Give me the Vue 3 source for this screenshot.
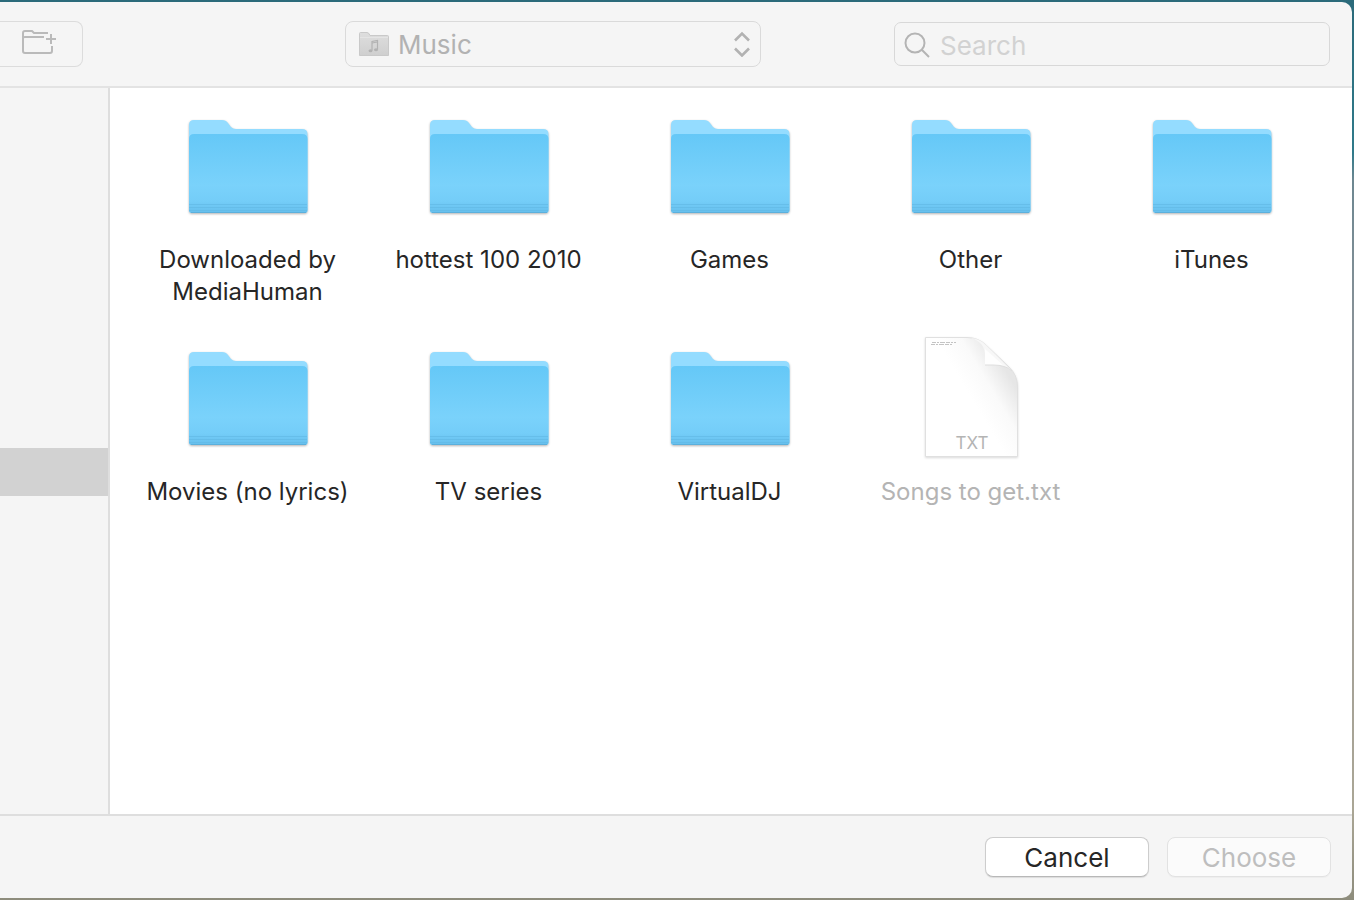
<template>
  <div class="desktop">
    <!-- gradients shared by all the file icons -->
    <svg class="gradients" width="0" height="0" aria-hidden="true">
      <defs>
        <linearGradient id="front" x1="0" y1="0" x2="0" y2="1">
          <stop offset="0" stop-color="#65c8f7" />
          <stop offset="0.65" stop-color="#7ad2fb" />
          <stop offset="0.85" stop-color="#74cdf8" />
          <stop offset="1" stop-color="#66bfed" />
        </linearGradient>
        <linearGradient id="paper" x1="0.45" y1="0.45" x2="0.8" y2="0.18">
          <stop offset="0" stop-color="#ffffff" />
          <stop offset="0.5" stop-color="#fafafa" />
          <stop offset="1" stop-color="#e6e6e6" />
        </linearGradient>
        <linearGradient id="curl" x1="0" y1="1" x2="1" y2="0">
          <stop offset="0" stop-color="#ffffff" />
          <stop offset="1" stop-color="#f0f0f0" />
        </linearGradient>
        <linearGradient id="gray" x1="0" y1="0" x2="0" y2="1">
          <stop offset="0" stop-color="#dedede" />
          <stop offset="1" stop-color="#cfcfcf" />
        </linearGradient>
      </defs>
    </svg>

    <main class="dialog">
      <header class="toolbar">
        <button class="new-folder" type="button" aria-label="New Folder" disabled>
          <svg width="36" height="26" viewBox="0 0 36 26" fill="none" stroke="#bababa" stroke-width="2">
            <path d="M26 4H12L10 2H3Q1 2 1 4V22Q1 24 3 24H28Q30 24 30 22V17" />
            <path d="M1 9Q1 8 3 8H22M29 5V15M24 10H34" />
          </svg>
        </button>

        <div class="location">
          <svg class="location-icon" width="32" height="28" viewBox="0 0 32 28">
            <path d="M1.5 25.5V3.500Q1.500 2.500 2.500 2.500H9Q11 2.500 12 5.500H29.500Q30.500 5.500 30.500 6.500V25.500Z" fill="url(#gray)" stroke="#c9c9c9" />
            <path d="M2 7.500H30" stroke="#e4e4e4" />
            <path d="M14 20.500V11.500L19.500 10.500V19.500" fill="none" stroke="#b2b2b2" stroke-width="1.2" />
            <path d="M14 13L19.500 12" stroke="#b2b2b2" />
            <ellipse cx="12.500" cy="20.700" rx="2" ry="1.500" fill="#b2b2b2" />
            <ellipse cx="18" cy="19.700" rx="2" ry="1.500" fill="#b2b2b2" />
          </svg>
          <select v-model="location" aria-label="Location" disabled>
            <option>Music</option>
          </select>
          <svg class="chevrons" width="18" height="26" viewBox="0 0 18 26" fill="none" stroke="#b2b2b2" stroke-width="2.6">
            <path d="M2 9.500L9 2.500L16 9.500M2 17.500L9 24.500L16 17.500" />
          </svg>
        </div>

        <label class="search">
          <svg width="26" height="26" viewBox="0 0 26 26" fill="none" stroke="#b4b4b4" stroke-width="2">
            <circle cx="11" cy="11" r="9.5" />
            <path d="M17.8 17.8L25 25" />
          </svg>
          <input v-model="query" type="text" placeholder="Search" aria-label="Search" />
        </label>
      </header>

      <div class="body">
        <aside class="sidebar">
          <div class="selected"></div>
        </aside>
        <ul class="files">
          <li v-for="item in items" :key="item.name" :class="{ dimmed: item.type === 'txt' }">
            <svg v-if="item.type === 'folder'" class="icon" viewBox="0 0 128 128">
              <path class="shadow" d="M5 23Q5 18 10 18H38Q42 18 44 21L47 25Q49 27 52 27H118Q123.500 27 123.500 32V108Q123.500 111 120.500 111H8Q5 111 5 108Z" fill="#94dcff" />
              <path d="M5 37Q5 32 10 32H118Q123.500 32 123.500 37V108Q123.500 111 120.500 111H8Q5 111 5 108Z" fill="url(#front)" />
              <path d="M5 102.500H123M5 105.500H123M5 108.500H123" stroke="#62b9e6" stroke-opacity="0.7" />
              <path d="M7 110.500H122" stroke="#5cb0dc" />
            </svg>
            <svg v-else class="icon" viewBox="0 0 128 128">
              <path class="shadow" d="M18.500 3.500H60Q71 3.500 79 11L102 33Q110.500 41 110.500 53V122.500H18.500Z" fill="url(#paper)" stroke="#e0e0e0" />
              <path d="M64 4Q78 8 78 22V31H86Q99 31 105 37L79 11Q73 5 64 4Z" fill="url(#curl)" />
              <path d="M78 15V31H86Q93 31 97 32Z" fill="#fefefe" />
              <path d="M78 31H86Q99 31 105 37" fill="none" stroke="#dedede" />
              <path d="M25 8.500H49M24 10.500H46" stroke="#c4c4c4" stroke-dasharray="4 1 2 1 5 1" />
              <text x="65" y="115" text-anchor="middle">TXT</text>
            </svg>
            <span class="name">{{ item.name }}</span>
          </li>
        </ul>
      </div>

      <footer class="actions">
        <button type="button">Cancel</button>
        <button type="button" disabled>Choose</button>
      </footer>
    </main>
  </div>
</template>

<script setup>
import { reactive, ref } from 'vue';

const location = ref('Music');
const query = ref('');

const items = reactive([
  { name: 'Downloaded by MediaHuman', type: 'folder' },
  { name: 'hottest 100 2010', type: 'folder' },
  { name: 'Games', type: 'folder' },
  { name: 'Other', type: 'folder' },
  { name: 'iTunes', type: 'folder' },
  { name: 'Movies (no lyrics)', type: 'folder' },
  { name: 'TV series', type: 'folder' },
  { name: 'VirtualDJ', type: 'folder' },
  { name: 'Songs to get.txt', type: 'txt' },
]);
</script>

<style>
body {
  margin: 0;
}
</style>

<style scoped>
* {
  box-sizing: border-box;
}

.desktop {
  display: flex;
  min-height: 100vh;
  padding: 2px 2px 2px 0;
  background: linear-gradient(#2b6a7a, #2f7a8a 17%, #6d8791 20%, #8e9499 40%, #a3a099 65%, #aaa695 90%, #8d8c7c);
  font-family: Inter, 'Liberation Sans', sans-serif;
  color: #262626;
}

.gradients {
  position: absolute;
}

.dialog {
  flex: 1;
  display: flex;
  flex-direction: column;
  overflow: hidden;
  border-radius: 0 10px 10px 0;
  background: #f5f5f5;
}

button,
input,
select {
  font: inherit;
}

.toolbar {
  display: flex;
  align-items: center;
  height: 86px;
  padding-right: 22px;
  border-bottom: 2px solid #e3e3e3;
  font-size: 26px;
}

.new-folder {
  display: flex;
  align-items: center;
  width: 83px;
  height: 46px;
  padding: 0 0 4px 22px;
  border: 1px solid #dcdcdc;
  border-left: 0;
  border-radius: 0 8px 8px 0;
  background: transparent;
}

.location {
  position: relative;
  width: 416px;
  height: 46px;
  margin-left: auto;
}

.location select {
  width: 100%;
  height: 100%;
  padding: 0 50px 0 52px;
  appearance: none;
  border: 1px solid #dadada;
  border-radius: 8px;
  background: transparent;
  color: #b2b2b2;
  opacity: 1;
}

.location-icon {
  position: absolute;
  top: 9px;
  left: 13px;
}

.chevrons {
  position: absolute;
  top: 10px;
  right: 10px;
}

.search {
  display: flex;
  align-items: center;
  gap: 10px;
  width: 436px;
  height: 44px;
  margin-left: 133px;
  padding: 2px 9px 0;
  border: 1px solid #d8d8d8;
  border-radius: 7px;
}

.search input {
  flex: 1;
  min-width: 0;
  padding: 0;
  border: 0;
  outline: 0;
  background: transparent;
}

.search input::placeholder {
  color: #d2d2d2;
}

.body {
  flex: 1;
  display: flex;
}

.sidebar {
  width: 110px;
  padding-top: 360px;
  border-right: 2px solid #dedede;
}

.selected {
  height: 48px;
  background: #d2d2d2;
}

.files {
  flex: 1;
  display: grid;
  grid-template-columns: repeat(5, 1fr);
  grid-auto-rows: 232px;
  margin: 0;
  padding: 14px 20px 14px 17px;
  list-style: none;
  background: #fff;
}

.files li {
  display: flex;
  flex-direction: column;
  align-items: center;
  gap: 14px;
}

.icon {
  width: 128px;
  height: 128px;
}

.icon text {
  font-size: 17px;
  fill: #b4b4b4;
}

.shadow {
  filter: drop-shadow(0 1px 1px rgba(0, 0, 0, 0.3));
}

.dimmed .shadow {
  filter: drop-shadow(0 1px 1px rgba(0, 0, 0, 0.15));
}

.name {
  max-width: 210px;
  font-size: 24px;
  line-height: 32px;
  text-align: center;
}

.dimmed .name {
  color: #b4b4b4;
}

.actions {
  display: flex;
  justify-content: flex-end;
  gap: 18px;
  height: 84px;
  padding: 21px 21px 0 0;
  border-top: 2px solid #dedede;
}

.actions button {
  width: 164px;
  height: 40px;
  padding: 0;
  border: 1px solid #cdcdcd;
  border-bottom-color: #b8b8b8;
  border-radius: 8px;
  background: #fff;
  color: #262626;
  font-size: 26px;
  box-shadow: 0 1px 1px rgba(0, 0, 0, 0.1);
}

.actions button:disabled {
  border-color: #e2e2e2;
  background: #fbfbfb;
  color: #bebebe;
  box-shadow: 0 1px 1px rgba(0, 0, 0, 0.03);
}
</style>
